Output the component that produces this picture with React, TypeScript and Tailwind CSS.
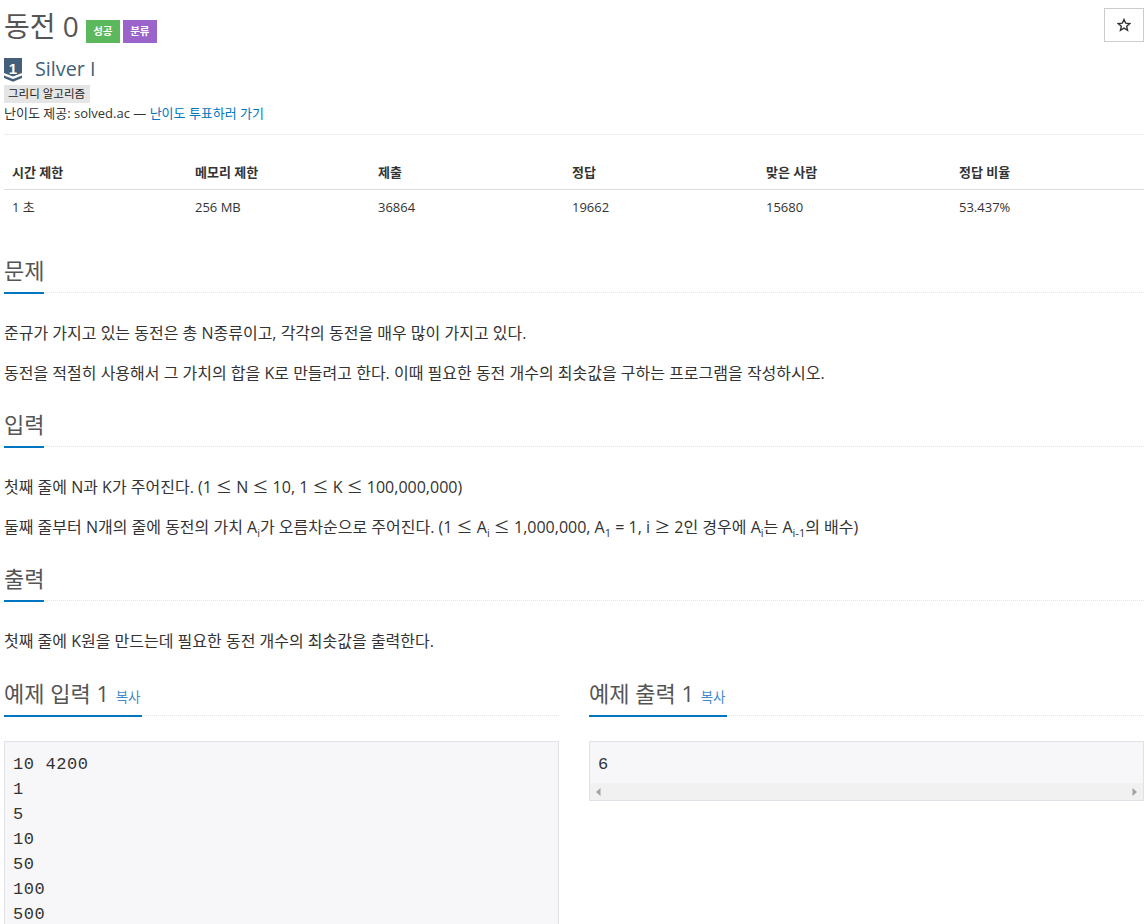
import { ReactNode } from 'react'

const stats = [
  { head: '시간 제한', value: '1 초', width: 'w-[183px]' },
  { head: '메모리 제한', value: '256 MB', width: 'w-[183px]' },
  { head: '제출', value: '36864', width: 'w-[194px]' },
  { head: '정답', value: '19662', width: 'w-[194px]' },
  { head: '맞은 사람', value: '15680', width: 'w-[193px]' },
  { head: '정답 비율', value: '53.437%', width: 'w-[193px]' },
]

function Headline({ children, barWidth }: { children: ReactNode; barWidth: string }) {
  return (
    <div className="relative h-[44px] border-b border-dotted border-[#e5e5e5]">
      <div className={`absolute left-0 bottom-[-2px] h-[2px] bg-[#0076c0] ${barWidth}`} />
      <h2 className="pt-[6px] text-[22px] leading-[30px] text-[#555]">{children}</h2>
    </div>
  )
}

function Sub({ children }: { children: ReactNode }) {
  return <sub className="text-[11px] leading-none align-[-1px]">{children}</sub>
}

// math signs are wider in the reference than in Open Sans
function Sign({ children }: { children: ReactNode }) {
  return <span className="leading-none font-['Noto_Sans_CJK_KR',sans-serif]">{children}</span>
}

export default function App() {
  return (
    <div className="h-[924px] overflow-hidden bg-white px-1 text-[16px] text-[#333] font-['Open_Sans','Noto_Sans_CJK_KR',sans-serif]">
      {/* Title */}
      <div className="flex h-[55px] items-start justify-between">
        <div className="flex items-start pt-[7px]">
          <h1 className="text-[28px] leading-[38px] text-[#555]">동전 0</h1>
          <span className="ml-[7px] mt-[13px] flex h-[23px] w-[34px] items-center justify-center bg-[#5cb85c] text-[10.5px] font-bold text-white">성공</span>
          <span className="ml-[3px] mt-[13px] flex h-[23px] w-[34px] items-center justify-center bg-[#9b64cb] text-[10.5px] font-bold text-white">분류</span>
        </div>
        <button className="mt-[8px] flex h-[34px] w-[40px] items-center justify-center border border-[#ccc] text-[15px] text-[#333]">
          <svg width="14" height="14" viewBox="0 0 24 24" fill="none" stroke="#333" strokeWidth="2.4">
            <path d="M12 2.5l2.9 6.4 6.9.7-5.2 4.6 1.5 6.8L12 17.4l-6.1 3.6 1.5-6.8-5.2-4.6 6.9-.7z" />
          </svg>
        </button>
      </div>

      {/* Tier */}
      <div className="flex h-[27px] items-center">
        <svg width="18" height="24" viewBox="0 0 18 24" className="mt-[2px] overflow-visible">
          <path d="M0 0h18v15L9 18.5 0 15z" fill="#435f7a" />
          <path d="M0 17.5l9 3.6 9-3.6v2.6L9 23.8 0 20.1z" fill="#435f7a" />
          <text x="9" y="15.5" textAnchor="middle" fontSize="15" fontWeight="700" fill="#fff" fontFamily="Liberation Sans">1</text>
        </svg>
        <span className="ml-[13px] text-[19.8px] leading-[27px] text-[#435f7a]">Silver I</span>
      </div>

      {/* Tags */}
      <div className="mt-[3px] flex h-[18px]">
        <span className="w-[86px] whitespace-nowrap bg-[#e5e5e5] px-[4px] text-[11.5px] leading-[18px] text-[#222]">그리디 알고리즘</span>
      </div>
      <p className="h-[20px] text-[13px] leading-[20px]">
        난이도 제공: solved.ac — <a className="text-[#0076c0]">난이도 투표하러 가기</a>
      </p>

      <div className="mt-[11px] h-px bg-[#eee]" />

      {/* Limits table */}
      <div className="mt-[20px] flex h-[35px] items-center border-b border-[#ddd] pt-[1px] text-[13px] font-bold">
        {stats.map(s => (
          <div key={s.head} className={`${s.width} px-2`}>{s.head}</div>
        ))}
      </div>
      <div className="flex h-[35px] items-center text-[13px]">
        {stats.map(s => (
          <div key={s.head} className={`${s.width} px-2`}>{s.value}</div>
        ))}
      </div>

      {/* 문제 */}
      <section className="mt-[24px]">
        <Headline barWidth="w-[40px]">문제</Headline>
        <p className="mt-[28px] leading-[24px]">준규가 가지고 있는 동전은 총 N종류이고, 각각의 동전을 매우 많이 가지고 있다.</p>
        <p className="mt-[16px] leading-[24px]">동전을 적절히 사용해서 그 가치의 합을 K로 만들려고 한다. 이때 필요한 동전 개수의 최솟값을 구하는 프로그램을 작성하시오.</p>
      </section>

      {/* 입력 */}
      <section className="mt-[18px]">
        <Headline barWidth="w-[40px]">입력</Headline>
        <p className="mt-[28px] leading-[24px]">첫째 줄에 N과 K가 주어진다. (1 <Sign>≤</Sign> N <Sign>≤</Sign> 10, 1 <Sign>≤</Sign> K <Sign>≤</Sign> 100,000,000)</p>
        <p className="mt-[16px] leading-[24px]">
          둘째 줄부터 N개의 줄에 동전의 가치 A<Sub>i</Sub>가 오름차순으로 주어진다. (1 <Sign>≤</Sign> A<Sub>i</Sub> <Sign>≤</Sign> 1,000,000, A<Sub>1</Sub> = 1, i <Sign>≥</Sign> 2인 경우에 A<Sub>i</Sub>는 A<Sub>i-1</Sub>의 배수)
        </p>
      </section>

      {/* 출력 */}
      <section className="mt-[18px]">
        <Headline barWidth="w-[40px]">출력</Headline>
        <p className="mt-[28px] leading-[24px]">첫째 줄에 K원을 만드는데 필요한 동전 개수의 최솟값을 출력한다.</p>
      </section>

      {/* Samples */}
      <div className="mt-[19px] grid grid-cols-[555px_555px] gap-x-[30px]">
        <div>
          <Headline barWidth="w-[138px]">
            예제 입력 1 <a className="ml-px text-[13.5px] text-[#428bca]">복사</a>
          </Headline>
          <pre className="mt-[25px] h-[300px] border border-[#e1e1e8] bg-[#f7f7f9] px-[8px] pt-[10px] text-[17px] leading-[25px] tracking-[0.6px] text-[#333] font-['Liberation_Mono',monospace]">{'10 4200\n1\n5\n10\n50\n100\n500'}</pre>
        </div>
        <div>
          <Headline barWidth="w-[138px]">
            예제 출력 1 <a className="ml-px text-[13.5px] text-[#428bca]">복사</a>
          </Headline>
          <div className="mt-[25px] h-[60px] border border-[#e1e1e8] bg-[#f7f7f9]">
            <pre className="h-[41px] px-[8px] pt-[10px] text-[17px] leading-[25px] tracking-[0.6px] text-[#333] font-['Liberation_Mono',monospace]">6</pre>
            {/* Scrollbar */}
            <div className="flex h-[17px] items-center justify-between bg-[#f1f1f1] px-[6px]">
              <svg width="5" height="8" viewBox="0 0 5 8"><path d="M4.5 0v8L0 4z" fill="#a3a3a3" /></svg>
              <svg width="5" height="8" viewBox="0 0 5 8"><path d="M.5 0v8L5 4z" fill="#a3a3a3" /></svg>
            </div>
          </div>
        </div>
      </div>
    </div>
  )
}
